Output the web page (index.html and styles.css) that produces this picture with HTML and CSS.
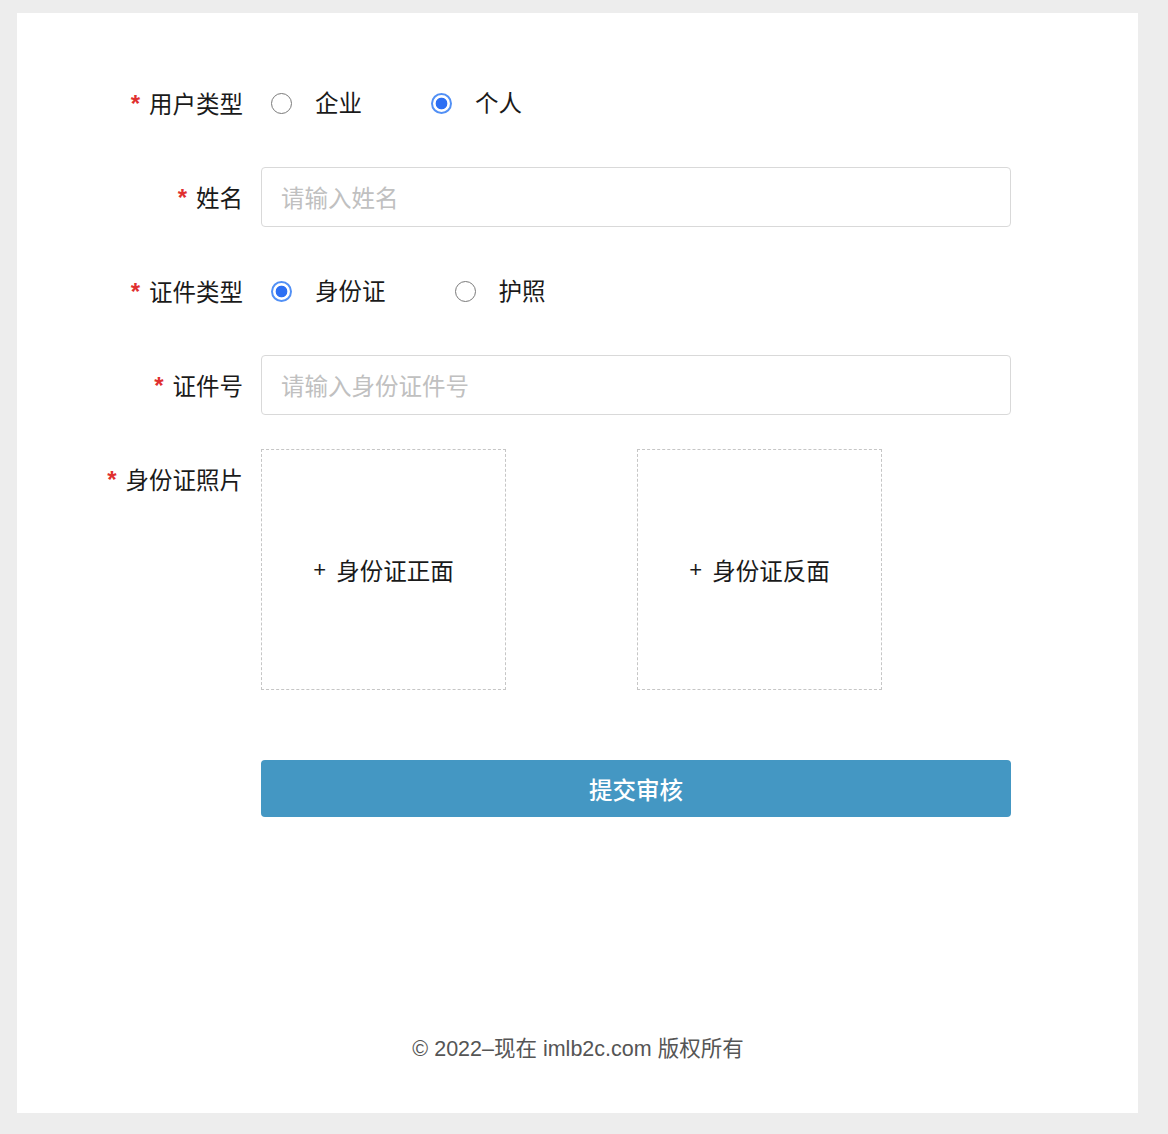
FILE: index.html
```html
<!DOCTYPE html>
<html lang="zh-CN">
<head>
<meta charset="utf-8">
<title>实名认证</title>
<link rel="stylesheet" href="styles.css">
</head>
<body>
<div class="card">
  <form class="form">
    <div class="label"><span class="star">*</span>用户类型</div>
    <div class="field radios">
      <label class="radio"><span class="dot"></span><span class="rtext">企业</span></label>
      <label class="radio checked"><span class="dot"></span><span class="rtext">个人</span></label>
    </div>

    <div class="label"><span class="star">*</span>姓名</div>
    <div class="field"><div class="input">请输入姓名</div></div>

    <div class="label"><span class="star">*</span>证件类型</div>
    <div class="field radios">
      <label class="radio checked"><span class="dot"></span><span class="rtext">身份证</span></label>
      <label class="radio"><span class="dot"></span><span class="rtext">护照</span></label>
    </div>

    <div class="label"><span class="star">*</span>证件号</div>
    <div class="field"><div class="input">请输入身份证件号</div></div>

    <div class="label label-top"><span class="star">*</span>身份证照片</div>
    <div class="uploads">
      <div class="upload"><span class="plus">+</span>身份证正面</div>
      <div class="upload"><span class="plus">+</span>身份证反面</div>
    </div>

    <div class="spacer"></div>
    <div class="submit-wrap"><div class="submit">提交审核</div></div>
  </form>
  <div class="footer">© 2022–现在 imlb2c.com 版权所有</div>
</div>
</body>
</html>
```

FILE: styles.css
```css
* { box-sizing: border-box; }
html, body { margin: 0; }
body {
  background: #ededed;
  padding: 13px 30px 21px 17px;
  font-family: "Noto Sans CJK SC", "Noto Sans", sans-serif;
  color: #1a1a1a;
}
.card {
  width: 1121px;
  height: 1100px;
  background: #fff;
  padding-top: 60px;
  padding-bottom: 49px;
  display: flex;
  flex-direction: column;
}
.form {
  display: grid;
  grid-template-columns: 226px 750px;
  column-gap: 18px;
  row-gap: 34px;
}
.label {
  height: 60px;
  line-height: 60px;
  text-align: right;
  font-size: 23.5px;
  color: #1a1a1a;
  white-space: nowrap;
}
.star {
  color: #e0302f;
  font-family: "Liberation Sans", sans-serif;
  font-size: 24px;
  font-weight: bold;
  margin-right: 9px;
  position: relative;
  top: -1px;
}
.field {
  height: 60px;
  display: flex;
  align-items: center;
}
.radios { padding-left: 10px; }
.radio {
  display: flex;
  align-items: center;
  margin-right: 69px;
}
.dot {
  width: 21px;
  height: 21px;
  border-radius: 50%;
  border: 1.5px solid #7a7a7a;
  background: #fff;
  flex: none;
}
.radio.checked .dot {
  border: 2px solid #5290f5;
  background: radial-gradient(circle, #2c6ff3 0, #2c6ff3 5.5px, #fff 6.2px);
}
.rtext {
  margin-left: 23px;
  font-size: 23.5px;
  color: #1a1a1a;
  line-height: 1;
}
.input {
  width: 750px;
  height: 60px;
  border: 1px solid #d9d9d9;
  border-radius: 4px;
  padding-left: 19px;
  line-height: 58px;
  font-size: 23.5px;
  color: #c0c0c0;
}
.label-top { align-self: start; }
.uploads {
  display: flex;
  gap: 131px;
}
.upload {
  width: 245px;
  height: 241px;
  border: 1.5px dashed #c6c6c6;
  display: flex;
  align-items: center;
  justify-content: center;
  font-size: 23.5px;
  color: #1a1a1a;
}
.plus {
  font-family: "Liberation Sans", sans-serif;
  font-size: 22px;
  margin-right: 10px;
}
.spacer { height: 36px; grid-column: 1 / span 2; margin-bottom: -34px; }
.submit-wrap { grid-column: 2; }
.submit {
  height: 57px;
  background: #4497c3;
  border-radius: 4px;
  color: #fff;
  font-size: 23.5px;
  font-weight: 500;
  display: flex;
  align-items: center;
  justify-content: center;
}
.footer {
  margin-top: auto;
  text-align: center;
  font-family: "Liberation Sans", "Noto Sans CJK SC", sans-serif;
  font-size: 21.5px;
  line-height: 30px;
  color: #555;
  padding-left: 1px;
}
```
